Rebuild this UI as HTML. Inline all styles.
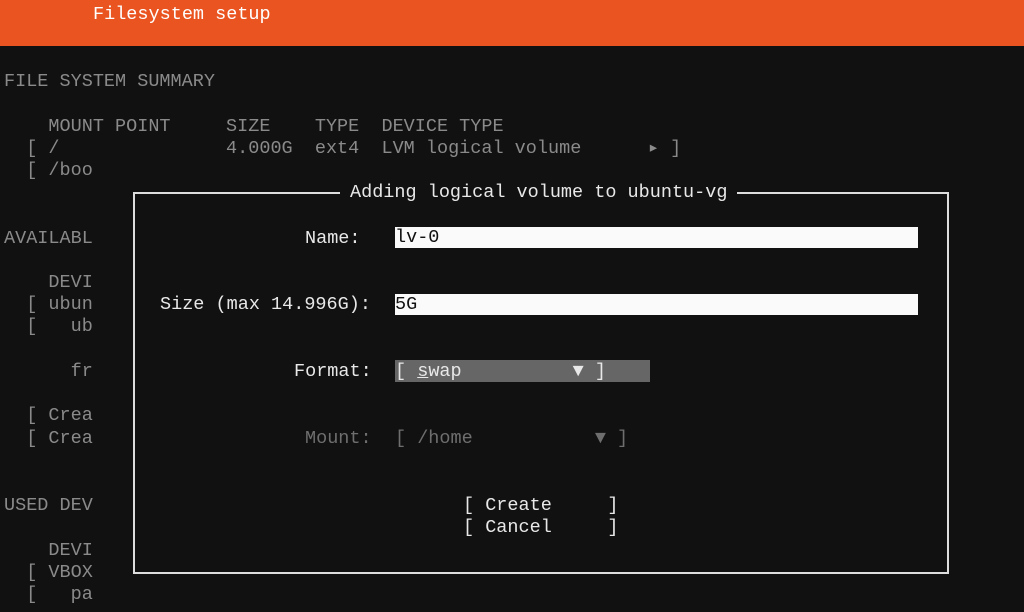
<!DOCTYPE html>
<html><head><style>
body{margin:0;width:1024px;height:612px;background:#111;overflow:hidden;position:relative;font-family:"Liberation Mono",monospace;font-size:18.5px;}
.t{position:absolute;white-space:pre;line-height:22px;height:22px;}
.g{color:#8a8a8a}
.w{color:#e8e8e8}
.d{color:#6e6e6e}
#hdr{position:absolute;left:0;top:0;width:1024px;height:46px;background:#e95420;}
#box{position:absolute;left:133px;top:192px;width:812px;height:378px;border:2px solid #ddd;background:#111;}
.in{position:absolute;background:#fafafa;height:21px;}
</style></head><body>
<div id="hdr"></div>
<div class="t" style="left:93px;top:4px;color:#fff">Filesystem setup</div>
<div class="t g" style="left:4px;top:71px">FILE SYSTEM SUMMARY</div>
<div class="t g" style="left:4px;top:116px">    MOUNT POINT     SIZE    TYPE  DEVICE TYPE</div>
<div class="t g" style="left:4px;top:138px">  [ /               4.000G  ext4  LVM logical volume      ▸ ]</div>
<div class="t g" style="left:4px;top:160px">  [ /boo</div>
<div class="t g" style="left:4px;top:228px">AVAILABL</div>
<div class="t g" style="left:4px;top:272px">    DEVI</div>
<div class="t g" style="left:4px;top:294px">  [ ubun</div>
<div class="t g" style="left:4px;top:316px">  [   ub</div>
<div class="t g" style="left:4px;top:361px">      fr</div>
<div class="t g" style="left:4px;top:405px">  [ Crea</div>
<div class="t g" style="left:4px;top:428px">  [ Crea</div>
<div class="t g" style="left:4px;top:495px">USED DEV</div>
<div class="t g" style="left:4px;top:540px">    DEVI</div>
<div class="t g" style="left:4px;top:562px">  [ VBOX</div>
<div class="t g" style="left:4px;top:584px">  [   pa</div>
<div id="box"></div>
<div class="t w" style="left:340px;top:182px;background:#111;padding:0 10px">Adding logical volume to ubuntu-vg</div>
<div class="t w" style="left:305px;top:228px">Name:</div>
<div class="in" style="left:395px;top:227px;width:523px"></div>
<div class="t" style="left:395px;top:227px;color:#111">lv-0</div>
<div class="t w" style="left:160px;top:294px">Size (max 14.996G):</div>
<div class="in" style="left:395px;top:294px;width:523px"></div>
<div class="t" style="left:395px;top:294px;color:#111">5G</div>
<div class="t w" style="left:294px;top:361px">Format:</div>
<div style="position:absolute;left:395px;top:360px;width:255px;height:22px;background:#666"></div>
<div class="t w" style="left:395px;top:361px">[ <u>s</u>wap          ▼ ]</div>
<div class="t d" style="left:305px;top:428px">Mount:</div>
<div class="t d" style="left:395px;top:428px">[ /home           ▼ ]</div>
<div class="t w" style="left:463px;top:495px">[ Create     ]</div>
<div class="t w" style="left:463px;top:517px">[ Cancel     ]</div>
</body></html>
